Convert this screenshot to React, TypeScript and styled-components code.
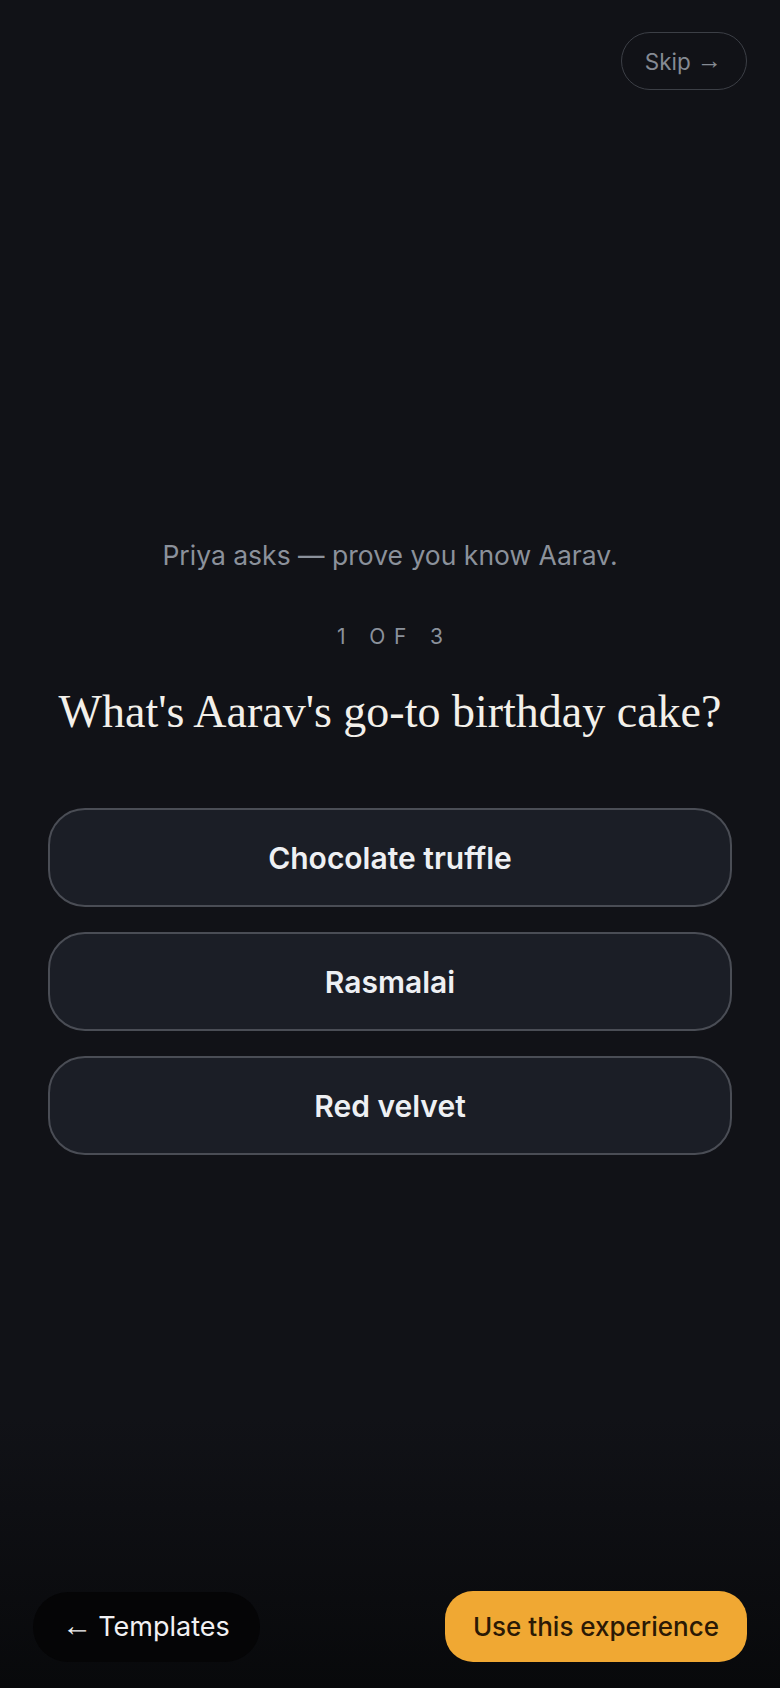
import React from "react";
import styled, { createGlobalStyle } from "styled-components";

const Global = createGlobalStyle`
  * { box-sizing: border-box; }
  html, body { margin: 0; padding: 0; background: #111217; }
  body { font-family: Inter, "Noto Sans", sans-serif; }
  button { font-family: inherit; }
`;

const Page = styled.div`
  min-height: 1688px;
  display: flex;
  flex-direction: column;
  background: linear-gradient(to bottom, #111217 0%, #111217 84%, #08090b 100%);
`;

const Header = styled.header`
  display: flex;
  justify-content: flex-end;
  padding: 32px 33px 0;
`;

const Arrow = styled.span`
  font-family: "Liberation Sans", "DejaVu Sans", sans-serif;
  font-weight: 400;
  font-size: 1.12em;
  line-height: 1;
`;

const SkipButton = styled.button`
  height: 58px;
  padding: 0 24px 0 23px;
  border-radius: 29px;
  border: 1.5px solid #3c3f46;
  background: transparent;
  color: #858a93;
  font-size: 22.5px;
  font-weight: 400;
  display: flex;
  align-items: center;
  gap: 6px;
`;

const Main = styled.main`
  flex: 1;
  display: flex;
  flex-direction: column;
  align-items: center;
  padding: 448px 48px 0;
`;

const Intro = styled.p`
  margin: 0;
  font-size: 26.5px;
  line-height: 34px;
  color: #8b919b;
  text-align: center;
`;

const Counter = styled.div`
  margin-top: 51px;
  font-size: 21px;
  line-height: 28px;
  letter-spacing: 0.42em;
  color: #8b919b;
  text-align: center;
  padding-left: 0.42em;
`;

const Question = styled.h1`
  margin: 34px 0 0;
  font-family: "Liberation Serif", "DejaVu Serif", serif;
  font-weight: 400;
  font-size: 46px;
  line-height: 54px;
  color: #f3f0ea;
  text-align: center;
  white-space: nowrap;
`;

const Options = styled.div`
  margin-top: 69px;
  width: 100%;
  display: flex;
  flex-direction: column;
  gap: 25px;
`;

const Option = styled.button`
  width: 100%;
  height: 99px;
  border-radius: 37px;
  border: 2px solid #4a4d55;
  background: #1b1e26;
  color: #eef0f3;
  font-size: 30px;
  font-weight: 600;
  display: flex;
  align-items: center;
  justify-content: center;
`;

const Footer = styled.footer`
  display: flex;
  justify-content: space-between;
  align-items: center;
  padding: 0 33px 26px;
`;

const BackButton = styled.button`
  height: 70px;
  padding: 0 30px 0 29px;
  border-radius: 35px;
  border: none;
  background: #050506;
  color: #f1f1f3;
  font-size: 27px;
  font-weight: 400;
  display: flex;
  align-items: center;
  gap: 6px;
`;

const UseButton = styled.button`
  height: 71px;
  padding: 0 28px;
  border-radius: 28px;
  border: none;
  background: #f0a833;
  color: #2b1905;
  font-size: 26px;
  font-weight: 500;
  display: flex;
  align-items: center;
`;

const options = ["Chocolate truffle", "Rasmalai", "Red velvet"];

export default function App() {
  return (
    <>
      <Global />
      <Page>
        <Header>
          <SkipButton>
            Skip <Arrow>→</Arrow>
          </SkipButton>
        </Header>
        <Main>
          <Intro>Priya asks — prove you know Aarav.</Intro>
          <Counter>1 OF 3</Counter>
          <Question>What's Aarav's go-to birthday cake?</Question>
          <Options>
            {options.map((o) => (
              <Option key={o}>{o}</Option>
            ))}
          </Options>
        </Main>
        <Footer>
          <BackButton>
            <Arrow>←</Arrow> Templates
          </BackButton>
          <UseButton>Use this experience</UseButton>
        </Footer>
      </Page>
    </>
  );
}
